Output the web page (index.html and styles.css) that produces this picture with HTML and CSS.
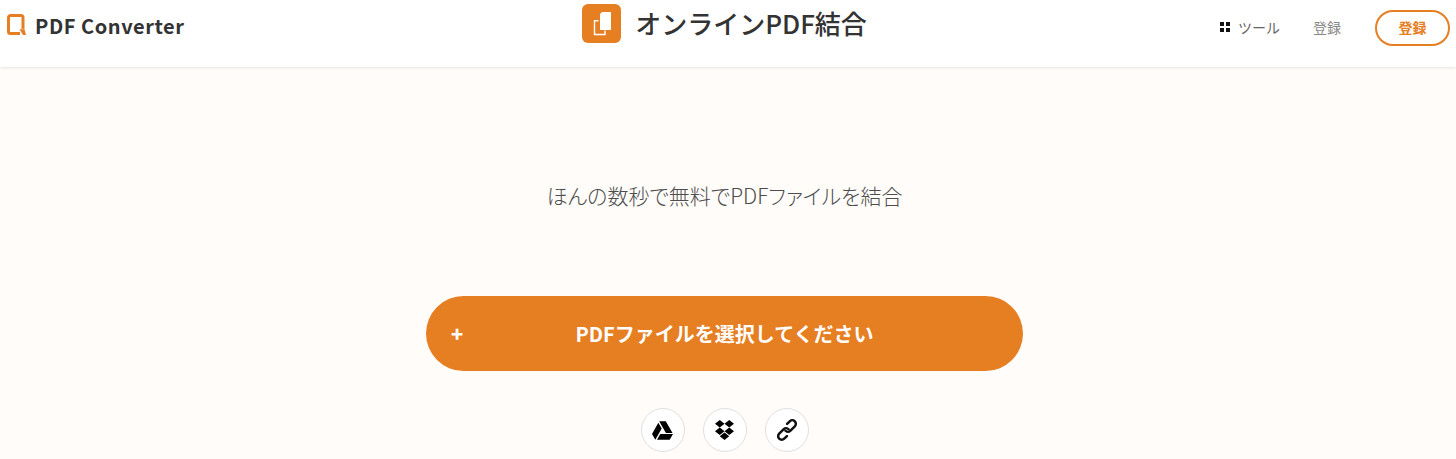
FILE: index.html
```html
<!DOCTYPE html>
<html lang="ja">
<head>
  <title>オンラインPDF結合</title>
  <link rel="stylesheet" href="styles.css">
</head>
<body>
  <header class="header">
    <a class="brand">
      <svg class="brand-icon" viewBox="0 0 19 21"><path d="M13 19.500H3.500a2 2 0 0 1-2-2V3.500a2 2 0 0 1 2-2h10.500a2 2 0 0 1 2 2V15" fill="none" stroke="#e67e22" stroke-width="3"/><path d="M12.500 15.200h5l1.500 5.800h-3z" fill="#e67e22"/></svg>
      <span>PDF Converter</span>
    </a>
    <div class="title">
      <span class="title-icon">
        <svg viewBox="0 0 39 39" width="39" height="39"><path d="M20 8h9v18h-11v-16z" fill="#fff"/><path d="M16.500 16.700h-4v13.800h10.500v-4" fill="none" stroke="#fff" stroke-width="1.400"/></svg>
      </span>
      <h1>オンラインPDF結合</h1>
    </div>
    <nav class="nav">
      <a class="nav-tools"><span class="dots"><i></i><i></i><i></i><i></i></span>ツール</a>
      <a class="nav-link">登録</a>
      <a class="nav-button">登録</a>
    </nav>
  </header>

  <main class="main">
    <p class="lead">ほんの数秒で無料でPDFファイルを結合</p>
    <button class="select">
      <span class="plus">+</span>
      <span>PDFファイルを選択してください</span>
    </button>
    <div class="sources">
      <a class="source"><svg viewBox="0 0 512 512" width="21" height="21"><path d="M339 314.900L175.400 32h161.200l163.600 282.900H339zm-137.500 23.600L120.900 480h310.500L512 338.500H201.500zM154.100 67.400L0 338.500 80.600 480 237 208.800 154.100 67.400z"/></svg></a>
      <a class="source"><svg viewBox="0 32 528 448" width="19" height="20" preserveAspectRatio="none"><path d="M264.400 116.300l-132 84.300 132 84.300-132 84.300L0 284.100l132.300-84.300L0 116.300 132.300 32l132.100 84.300zM131.600 395.700l132-84.300 132 84.300-132 84.300-132-84.300zm132.800-111.600l132-84.300-132-83.600L395.700 32 528 116.300l-132.300 84.300L528 284.800l-132.300 84.300-131.300-85z"/></svg></a>
      <a class="source"><svg viewBox="0 0 24 24" width="26" height="26" fill="none" stroke="#111" stroke-width="2.300" stroke-linecap="round"><g transform="rotate(-45 12 12)"><path d="M13.500 12.500a3 3 0 0 0-3-3.200H4.500a3.300 3.300 0 0 0 0 6.600H8"/><path d="M10.500 11.500a3 3 0 0 0 3 3.200H19.500a3.300 3.300 0 0 0 0-6.600H16"/></g></svg></a>
    </div>
  </main>
</body>
</html>
```

FILE: styles.css
```css
* { box-sizing: border-box; }
html, body { height: 100%; }
body { margin: 0; overflow: hidden; background: #fffcf9; color: #333; font-family: "Noto Sans CJK JP", "Noto Sans", sans-serif; }

.header { height: 67px; background: #fff; box-shadow: 0 1px 3px rgba(0, 0, 0, 0.1); display: grid; grid-template-columns: 1fr auto 1fr; padding: 0 6px 0 7px; }
.brand { display: flex; align-items: center; gap: 9px; height: 50px; font-size: 20px; font-weight: 700; letter-spacing: 0.55px; color: #333; }
.brand-icon { width: 19px; height: 21px; margin-top: -2px; }

.title { display: flex; align-items: flex-start; gap: 14px; padding-top: 4px; margin-left: -8px; }
.title-icon { width: 39px; height: 39px; border-radius: 6px; background: #e67e22; display: flex; }
.title h1 { margin: 0; font-size: 26px; font-weight: 500; line-height: 37px; color: #333; }

.nav { display: flex; align-items: center; justify-content: flex-end; height: 56px; font-size: 14px; color: #666; }
.nav-tools { display: flex; align-items: center; gap: 8px; margin-right: 33px; padding-bottom: 2px; }
.dots { display: grid; grid-template-columns: 4px 4px; gap: 2px; }
.dots i { width: 4px; height: 4px; background: #111; }
.nav-link { margin-right: 34px; padding-bottom: 2px; color: #888; }
.nav-button { width: 75px; height: 36px; padding-bottom: 2px; border: 2px solid #e67e22; border-radius: 18px; display: flex; align-items: center; justify-content: center; color: #e67e22; font-weight: 700; }

.main { display: flex; flex-direction: column; align-items: center; padding-right: 7px; }
.lead { margin: 113px 0 0; font-size: 21px; line-height: 30px; font-weight: 300; color: #4d4d4d; font-feature-settings: "palt"; }
.select { margin-top: 86px; width: 597px; height: 75px; border: 0; border-radius: 38px; background: #e67e22; color: #fff; font-family: inherit; font-size: 20px; font-weight: 700; display: grid; grid-template-columns: 1fr auto 1fr; align-items: center; padding: 0 25px; }
.plus { text-align: left; font-size: 20px; font-weight: 900; }
.sources { display: flex; gap: 18px; margin-top: 37px; }
.source { width: 44px; height: 44px; border-radius: 50%; border: 1px solid #e2e0de; background: #fff; display: flex; align-items: center; justify-content: center; }
```
